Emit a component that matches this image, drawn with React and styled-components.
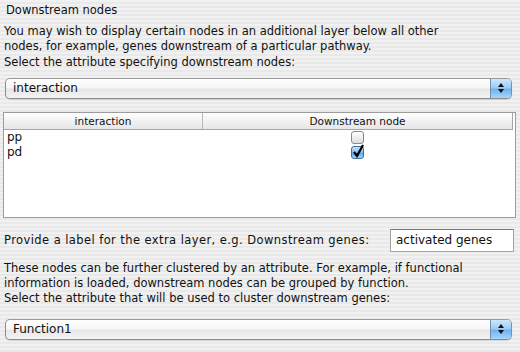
import React from 'react'
import styled, { createGlobalStyle } from 'styled-components'

const GlobalStyle = createGlobalStyle`
  html, body {
    margin: 0;
    padding: 0;
  }
  body {
    width: 520px;
    height: 352px;
    overflow: hidden;
    font-family: "DejaVu Sans", "Liberation Sans", sans-serif;
    color: #111;
    background: repeating-linear-gradient(
      to bottom,
      #f1f1f1 0px,
      #f1f1f1 2px,
      #e9e9e9 2px,
      #e9e9e9 4px
    );
  }
`;

const Panel = styled.div`
  display: flex;
  flex-direction: column;
  width: 520px;
  height: 352px;
  box-sizing: border-box;
  padding: 3px 6px 0 3px;
  font-size: 11.5px;
`;

const Title = styled.div`
  line-height: 15px;
  padding-left: 3px;
`;

const Para = styled.div`
  line-height: 15.3px;
  margin-top: ${(p) => p.$top || 0}px;
  padding-left: 1px;
`;

const Select = styled.div`
  display: flex;
  align-items: stretch;
  height: 19px;
  margin: ${(p) => p.$top}px 0 0 2px;
  width: 505px;
  border: 1px solid #8c8c8c;
  border-top-color: #9a9a9a;
  border-radius: 5px;
  overflow: hidden;
  background: linear-gradient(to bottom, #ffffff 0%, #f6f6f6 45%, #e6e6e6 55%, #f4f4f4 100%);
  box-shadow: 0 1px 1px rgba(0, 0, 0, 0.12);
`;

const SelectText = styled.div`
  flex: 1;
  padding-left: 7px;
  font-size: 12px;
  line-height: 19px;
`;

const ArrowBox = styled.div`
  width: 20px;
  display: flex;
  flex-direction: column;
  align-items: center;
  justify-content: center;
  gap: 2px;
  border-left: 1px solid #6f8fb3;
  background: linear-gradient(to bottom, #cfe6fb 0%, #9dcdf6 45%, #6fb2ef 55%, #a8d6fb 100%);
`;

const Table = styled.div`
  margin: 13px 0 0 0;
  width: 511px;
  height: 104px;
  border: 1px solid #9c9c9c;
  background: #fff;
  display: flex;
  flex-direction: column;
`;

const HeadRow = styled.div`
  display: grid;
  grid-template-columns: 199px 1fr;
  height: 16px;
  border-bottom: 1px solid #a6a6a6;
  margin-right: 2px;
  border-right: 1px solid #a6a6a6;
  background: linear-gradient(to bottom, #ffffff 0%, #f2f2f2 50%, #e6e6e6 100%);
`;

const HeadCell = styled.div`
  text-align: center;
  font-size: 10.5px;
  line-height: 16px;
  border-right: ${(p) => (p.$last ? 'none' : '1px solid #b8b8b8')};
`;

const Row = styled.div`
  display: grid;
  grid-template-columns: 199px 1fr;
  height: 15px;
  align-items: center;
`;

const Cell = styled.div`
  font-size: 12px;
  padding-left: 3px;
  line-height: 15px;
`;

const CheckCell = styled.div`
  display: flex;
  justify-content: center;
  padding-right: 4px;
`;

const Box = styled.div`
  position: relative;
  width: 11px;
  height: 11px;
  border: 1px solid ${(p) => (p.$on ? '#3d6e9e' : '#8a8a8a')};
  border-radius: 3px;
  background: ${(p) =>
    p.$on
      ? 'linear-gradient(to bottom, #c4e1fb 0%, #8cc2f2 45%, #5ea5e8 55%, #a5d3fa 100%)'
      : 'linear-gradient(to bottom, #ffffff 0%, #eeeeee 50%, #dcdcdc 100%)'};
`;

const Tick = styled.svg`
  position: absolute;
  left: 0px;
  top: -3px;
`;

const LabelRow = styled.div`
  display: flex;
  align-items: center;
  justify-content: space-between;
  margin-top: 10px;
  height: 25px;
  padding-left: 1px;
`;

const Label = styled.span`
  letter-spacing: 0.42px;
`;

const Input = styled.div`
  width: 117px;
  height: 21px;
  border: 1px solid #a3a3a3;
  border-top-color: #777;
  background: #fff;
  font-size: 12px;
  line-height: 21px;
  padding-left: 5px;
  margin-right: 0;
`;

function Arrows() {
  return (
    <ArrowBox>
      <svg width="6" height="4" viewBox="0 0 6 4">
        <path d="M3 0 L6 4 L0 4 Z" fill="#111" />
      </svg>
      <svg width="6" height="4" viewBox="0 0 6 4">
        <path d="M0 0 L6 0 L3 4 Z" fill="#111" />
      </svg>
    </ArrowBox>
  );
}

function Check({ on }) {
  return (
    <Box $on={on}>
      {on && (
        <Tick width="13" height="14" viewBox="0 0 13 14">
          <path d="M2 8 L5 12 L11 1" fill="none" stroke="#000" strokeWidth="2.2" />
        </Tick>
      )}
    </Box>
  );
}

export default function App() {
  return (
    <>
      <GlobalStyle />
      <Panel>
        <Title>Downstream nodes</Title>
        <Para $top={6}>
          You may wish to display certain nodes in an additional layer below all other
          <br />
          nodes, for example, genes downstream of a particular pathway.
          <br />
          Select the attribute specifying downstream nodes:
        </Para>
        <Select $top={8}>
          <SelectText>interaction</SelectText>
          <Arrows />
        </Select>
        <Table>
          <HeadRow>
            <HeadCell>interaction</HeadCell>
            <HeadCell $last>Downstream node</HeadCell>
          </HeadRow>
          <Row>
            <Cell>pp</Cell>
            <CheckCell>
              <Check on={false} />
            </CheckCell>
          </Row>
          <Row>
            <Cell>pd</Cell>
            <CheckCell>
              <Check on />
            </CheckCell>
          </Row>
        </Table>
        <LabelRow>
          <Label>Provide a label for the extra layer, e.g. Downstream genes:</Label>
          <Input>activated genes</Input>
        </LabelRow>
        <Para $top={8}>
          These nodes can be further clustered by an attribute. For example, if functional
          <br />
          information is loaded, downstream nodes can be grouped by function.
          <br />
          Select the attribute that will be used to cluster downstream genes:
        </Para>
        <Select $top={12}>
          <SelectText>Function1</SelectText>
          <Arrows />
        </Select>
      </Panel>
    </>
  );
}
